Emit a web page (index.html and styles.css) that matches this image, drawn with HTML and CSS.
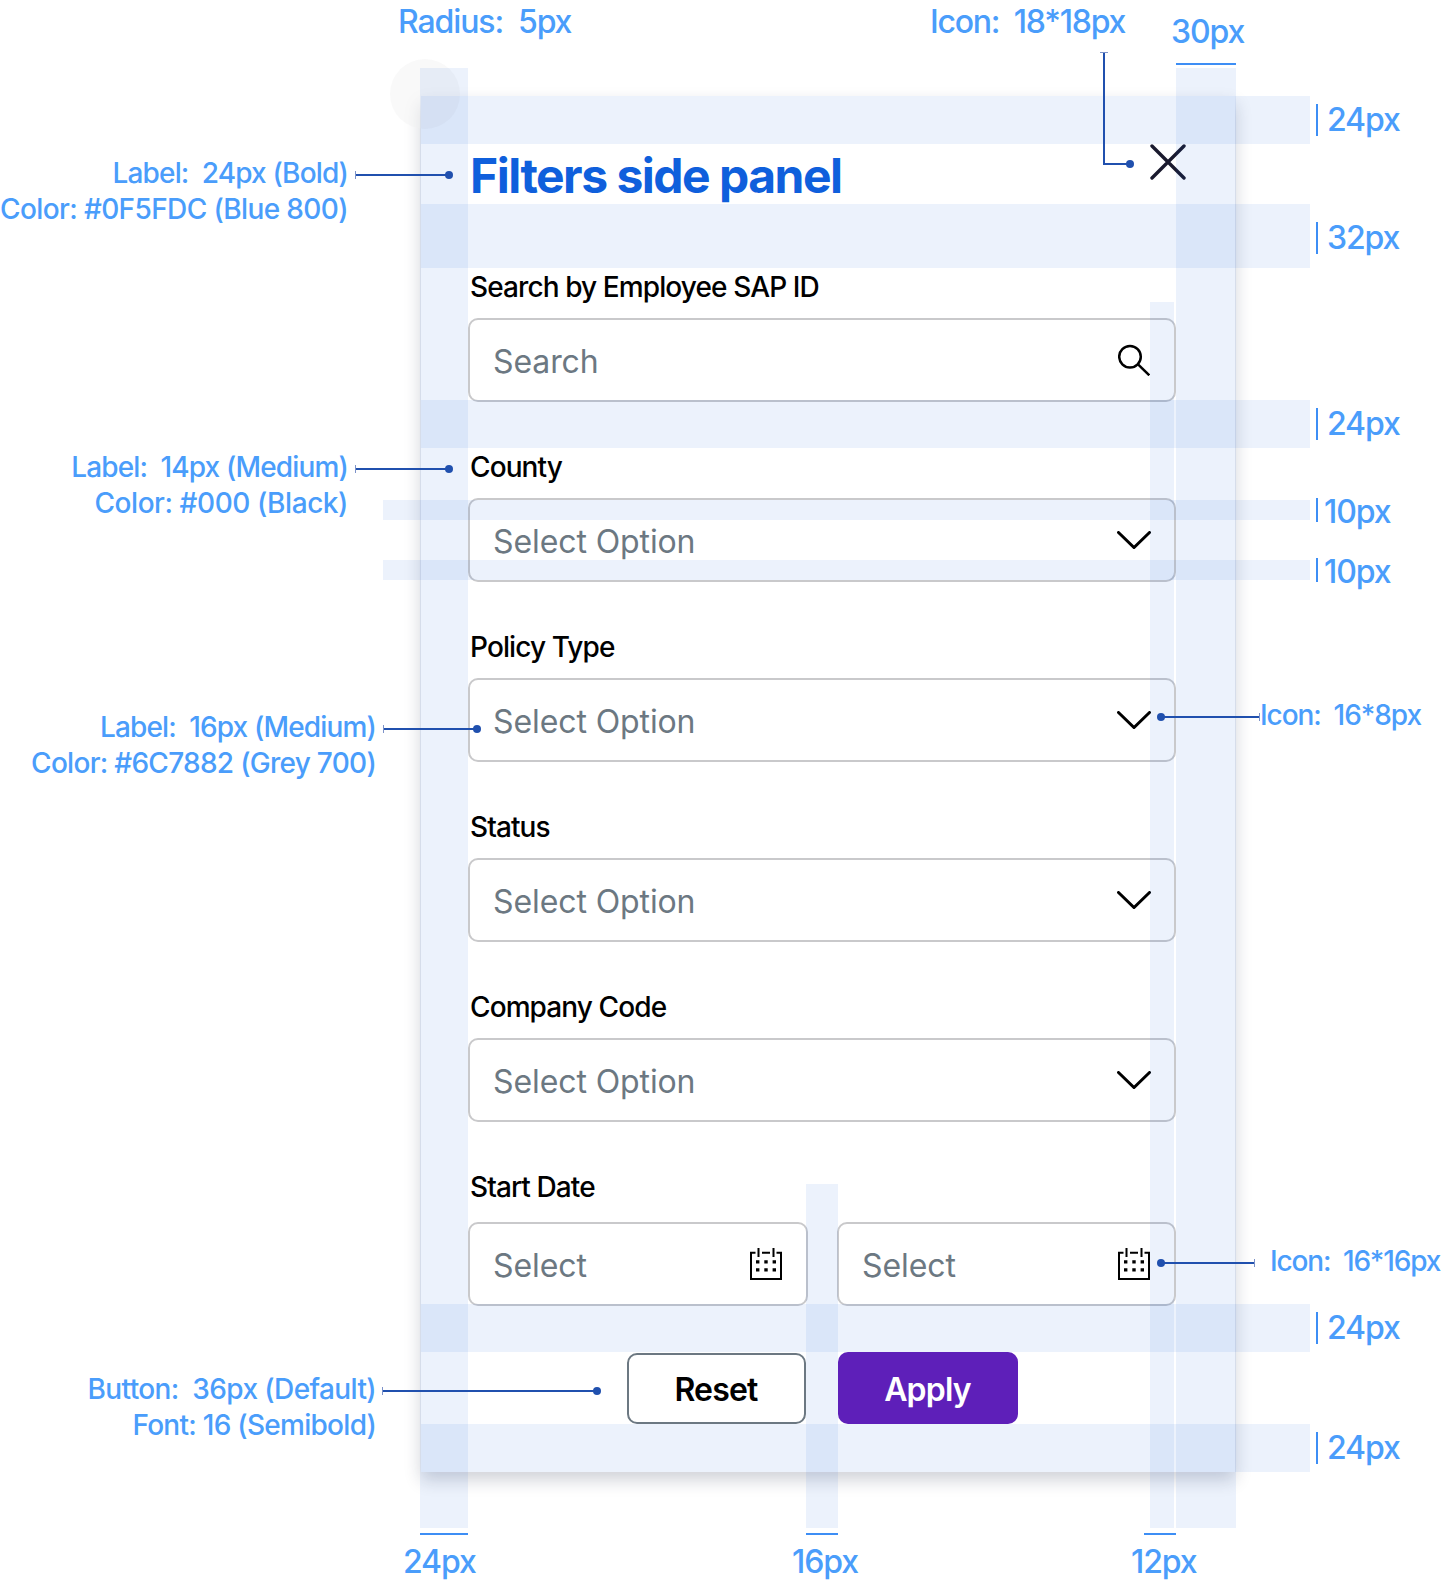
FILE: index.html
```html
<!DOCTYPE html>
<html lang="en">
<head>
<meta charset="utf-8">
<title>Filters side panel spec</title>
<link rel="stylesheet" href="styles.css">
</head>
<body>
<div class="canvas">
  <aside class="panel">
    <header class="panel-head">
      <h1 class="panel-title">Filters side panel</h1>
      <svg class="icon-close" viewBox="0 0 36 36" width="36" height="36"><path d="M2 2 34 34M34 2 2 34"/></svg>
    </header>
    <div class="field">
      <label class="field-label">Search by Employee SAP ID</label>
      <div class="control"><span>Search</span>
        <svg class="icon-search" viewBox="0 0 32 32" width="32" height="32"><circle cx="12" cy="12.7" r="10.8"/><path d="M20.3 20.7 31.3 31.3"/></svg>
      </div>
    </div>
    <div class="field">
      <label class="field-label">County</label>
      <div class="control"><span>Select Option</span>
        <svg class="icon-chevron" viewBox="0 0 34 18" width="34" height="18"><path d="M1.5 1.5 17 16.5 32.5 1.5"/></svg>
      </div>
    </div>
    <div class="field">
      <label class="field-label">Policy Type</label>
      <div class="control"><span>Select Option</span>
        <svg class="icon-chevron" viewBox="0 0 34 18" width="34" height="18"><path d="M1.5 1.5 17 16.5 32.5 1.5"/></svg>
      </div>
    </div>
    <div class="field">
      <label class="field-label">Status</label>
      <div class="control"><span>Select Option</span>
        <svg class="icon-chevron" viewBox="0 0 34 18" width="34" height="18"><path d="M1.5 1.5 17 16.5 32.5 1.5"/></svg>
      </div>
    </div>
    <div class="field">
      <label class="field-label">Company Code</label>
      <div class="control"><span>Select Option</span>
        <svg class="icon-chevron" viewBox="0 0 34 18" width="34" height="18"><path d="M1.5 1.5 17 16.5 32.5 1.5"/></svg>
      </div>
    </div>
    <div class="field field-date">
      <label class="field-label">Start Date</label>
      <div class="date-row">
        <div class="control"><span>Select</span>
          <svg class="icon-cal" viewBox="0 0 32 32" width="32" height="32"><path class="cal-line" d="M5.5 4.7H1V31H31V4.7H26.5M12 4.7H20M8.5 0V9M23.5 0V9"/><path class="cal-dots" d="M6 12.2h3.4v3.4H6zM14.3 12.2h3.4v3.4h-3.4zM22.6 12.2h3.4v3.4h-3.4zM6 20.2h3.4v3.4H6zM14.3 20.2h3.4v3.4h-3.4zM22.6 20.2h3.4v3.4h-3.4z"/></svg>
        </div>
        <div class="control"><span>Select</span>
          <svg class="icon-cal" viewBox="0 0 32 32" width="32" height="32"><path class="cal-line" d="M5.5 4.7H1V31H31V4.7H26.5M12 4.7H20M8.5 0V9M23.5 0V9"/><path class="cal-dots" d="M6 12.2h3.4v3.4H6zM14.3 12.2h3.4v3.4h-3.4zM22.6 12.2h3.4v3.4h-3.4zM6 20.2h3.4v3.4H6zM14.3 20.2h3.4v3.4h-3.4zM22.6 20.2h3.4v3.4h-3.4z"/></svg>
        </div>
      </div>
    </div>
    <div class="actions">
      <button class="btn btn-reset" type="button">Reset</button>
      <button class="btn btn-apply" type="button">Apply</button>
    </div>
  </aside>

  <div class="corner-mark"></div>

  <div class="guide h h1"></div>
  <div class="guide h h2"></div>
  <div class="guide h h3"></div>
  <div class="guide h h4"></div>
  <div class="guide h h5"></div>
  <div class="guide h h6"></div>
  <div class="guide h h7"></div>
  <div class="guide v v1"></div>
  <div class="guide v v2"></div>
  <div class="guide v v3"></div>
  <div class="guide v v4"></div>

  <div class="bar bar-r r1"></div>
  <div class="bar bar-r r2"></div>
  <div class="bar bar-r r3"></div>
  <div class="bar bar-r r4"></div>
  <div class="bar bar-r r5"></div>
  <div class="bar bar-r r6"></div>
  <div class="bar bar-r r7"></div>
  <div class="bar bar-t t1"></div>
  <div class="bar bar-t t2"></div>
  <div class="bar bar-t t3"></div>
  <div class="bar bar-t t4"></div>

  <div class="leader l-title"></div>
  <div class="leader l-county"></div>
  <div class="leader l-select"></div>
  <div class="leader l-button"></div>
  <div class="leader l-chevron"></div>
  <div class="leader l-cal"></div>
  <div class="leader-elbow"></div>

  <p class="note big n-radius">Radius:  5px</p>
  <p class="note big n-icon18">Icon:  18*18px</p>
  <p class="note big n-30">30px</p>
  <p class="note big n-r1">24px</p>
  <p class="note big n-r2">32px</p>
  <p class="note big n-r3">24px</p>
  <p class="note big n-r4">10px</p>
  <p class="note big n-r5">10px</p>
  <p class="note big n-r6">24px</p>
  <p class="note big n-r7">24px</p>
  <p class="note big n-b1">24px</p>
  <p class="note big n-b2">16px</p>
  <p class="note big n-b3">12px</p>

  <p class="note n-right n-title">Label:  24px (Bold)<br><span class="wide-1">Color: #0F5FDC (Blue 800)</span></p>
  <p class="note n-right n-county">Label:  14px (Medium)<br><span class="wide-2">Color: #000 (Black)</span></p>
  <p class="note n-right n-select">Label:  16px (Medium)<br><span class="wide-3">Color: #6C7882 (Grey 700)</span></p>
  <p class="note n-right n-button"><span class="wide-1">Button:  36px (Default)</span><br><span class="wide-3">Font: 16 (Semibold)</span></p>
  <p class="note n-chev">Icon:  16*8px</p>
  <p class="note n-cal">Icon:  16*16px</p>
</div>
</body>
</html>
```

FILE: styles.css
```css
* { box-sizing: border-box; }

html, body { margin: 0; background: #fff; }

body {
  font-family: Inter, "Liberation Sans", sans-serif;
  color: #000;
}

.canvas {
  position: relative;
  width: 1442px;
  height: 1580px;
  padding: 96px 0 0 421px;
  overflow: hidden;
}

/* Panel */
.panel {
  width: 814px;
  padding: 48px 59px 48px 47px;
  background: #fff;
  box-shadow: 0 8px 16px rgba(20, 30, 60, .2);
}

.panel-head {
  display: flex;
  justify-content: space-between;
  align-items: flex-start;
  height: 60px;
  margin-bottom: 64px;
}

.panel-title {
  margin: 0;
  padding: 2px 0 0 2px;
  font-size: 48px;
  line-height: 60px;
  font-weight: 700;
  letter-spacing: -1.5px;
  color: #0F5FDC;
}

.icon-close {
  margin-right: -10px;
  fill: none;
  stroke: #1a1a2e;
  stroke-width: 3.4;
  stroke-linecap: round;
}

.field { margin-bottom: 46px; }

.field-label {
  display: block;
  height: 38px;
  margin-bottom: 12px;
  padding-left: 2px;
  font-size: 28px;
  line-height: 38px;
  font-weight: 450;
  letter-spacing: -.9px;
}

.control {
  display: flex;
  justify-content: space-between;
  align-items: center;
  height: 84px;
  padding: 0 24px 0 23px;
  background: #fff;
  border: 2px solid #c9c9cb;
  border-radius: 10px;
  font-size: 32px;
  letter-spacing: -.1px;
  color: #6C7882;
}

.control span { padding-top: 2px; }

.control svg { flex: none; }

.icon-search {
  fill: none;
  stroke: #000;
  stroke-width: 2.5;
}

.icon-chevron {
  margin-right: -1px;
  fill: none;
  stroke: #000;
  stroke-width: 3;
  stroke-linecap: round;
}

.cal-line { fill: none; stroke: #000; stroke-width: 2; }
.cal-dots { fill: #000; }

.field-date .field-label { margin-bottom: 16px; }

.date-row {
  display: grid;
  grid-template-columns: 340px 339px;
  gap: 29px;
}

.actions {
  display: flex;
  justify-content: center;
  align-items: center;
  gap: 32px;
  height: 72px;
}

.btn {
  padding: 2px 0 0;
  font-family: inherit;
  font-size: 32px;
  font-weight: 600;
  letter-spacing: -.8px;
  border-radius: 10px;
}

.btn-reset {
  width: 179px;
  height: 71px;
  background: #fff;
  border: 2px solid #6C7882;
  color: #000;
}

.btn-apply {
  width: 180px;
  height: 72px;
  background: #5E1FB9;
  border: 0;
  color: #fff;
}

/* Corner marker */
.corner-mark {
  position: absolute;
  left: 390px;
  top: 59px;
  width: 70px;
  height: 70px;
  border-radius: 50%;
  background: rgba(240, 240, 240, .4);
}

/* Spacing guides */
.guide { position: absolute; background: rgba(15, 95, 220, .08); pointer-events: none; }

.h { left: 421px; width: 889px; }
.h1 { top: 96px; height: 48px; }
.h2 { top: 204px; height: 64px; }
.h3 { top: 400px; height: 48px; }
.h4 { top: 500px; height: 20px; left: 383px; width: 927px; }
.h5 { top: 560px; height: 20px; left: 383px; width: 927px; }
.h6 { top: 1304px; height: 48px; }
.h7 { top: 1424px; height: 48px; }

.v { top: 68px; height: 1460px; }
.v1 { left: 420px; width: 48px; }
.v2 { left: 1176px; width: 60px; }
.v3 { left: 1150px; width: 24px; top: 302px; height: 1226px; }
.v4 { left: 806px; width: 32px; top: 1184px; height: 344px; }

/* Measure bars */
.bar { position: absolute; background: #3D8EF5; }

.bar-r { left: 1316px; width: 2px; height: 32px; }
.r1 { top: 104px; }
.r2 { top: 222px; }
.r3 { top: 408px; }
.r4 { top: 498px; height: 24px; }
.r5 { top: 558px; height: 24px; }
.r6 { top: 1312px; }
.r7 { top: 1432px; }

.bar-t { height: 2px; }
.t1 { left: 1176px; top: 63px; width: 60px; }
.t2 { left: 420px; top: 1533px; width: 48px; }
.t3 { left: 806px; top: 1533px; width: 32px; }
.t4 { left: 1144px; top: 1533px; width: 32px; }

/* Leader lines */
.leader {
  position: absolute;
  height: 2px;
  background: #2050AE;
}

.leader::before {
  content: "";
  position: absolute;
  left: 0;
  top: -3px;
  width: 1px;
  height: 8px;
  background: #7d93c9;
}

.leader::after {
  content: "";
  position: absolute;
  right: -4px;
  top: -3px;
  width: 8px;
  height: 8px;
  border-radius: 50%;
  background: #2050AE;
}

.l-title { left: 355px; top: 174px; width: 94px; }
.l-county { left: 355px; top: 468px; width: 94px; }
.l-select { left: 383px; top: 728px; width: 94px; }
.l-button { left: 382px; top: 1390px; width: 215px; }

.l-chevron { left: 1161px; top: 716px; width: 99px; }
.l-cal { left: 1161px; top: 1262px; width: 94px; }

.l-chevron::after, .l-cal::after { right: auto; left: -4px; }
.l-chevron::before, .l-cal::before { left: auto; right: 0; }

.leader-elbow {
  position: absolute;
  left: 1103px;
  top: 52px;
  width: 27px;
  height: 113px;
  border-left: 2px solid #2050AE;
  border-bottom: 2px solid #2050AE;
}

.leader-elbow::before {
  content: "";
  position: absolute;
  left: -5px;
  top: 0;
  width: 8px;
  height: 1px;
  background: #7d93c9;
}

.leader-elbow::after {
  content: "";
  position: absolute;
  right: -4px;
  bottom: -5px;
  width: 8px;
  height: 8px;
  border-radius: 50%;
  background: #2050AE;
}

/* Annotation text */
.note {
  position: absolute;
  margin: 0;
  white-space: pre;
  font-size: 28px;
  line-height: 36px;
  font-weight: 550;
  letter-spacing: -.85px;
  color: #4A9DFB;
}

.big { font-size: 32px; line-height: 40px; letter-spacing: -1.1px; }

.wide-1 { letter-spacing: -.62px; }
.wide-2 { letter-spacing: -.43px; }
.wide-3 { letter-spacing: -.72px; }

.n-right { text-align: right; right: 1094px; }

.n-radius { left: 398px; top: 2px; }
.n-icon18 { left: 930px; top: 2px; letter-spacing: -1.25px; }
.n-30 { left: 1171px; top: 12px; }

.n-r1, .n-r2, .n-r3, .n-r6, .n-r7 { left: 1327px; }
.n-r4, .n-r5 { left: 1324px; }
.n-r1 { top: 100px; }
.n-r2 { top: 218px; }
.n-r3 { top: 404px; }
.n-r4 { top: 492px; }
.n-r5 { top: 552px; }
.n-r6 { top: 1308px; }
.n-r7 { top: 1428px; }

.n-b1, .n-b2, .n-b3 { top: 1542px; }
.n-b1 { left: 403px; }
.n-b2 { left: 792px; }
.n-b3 { left: 1131px; }

.n-title { top: 155px; }
.n-county { top: 449px; }
.n-select { top: 709px; right: 1066px; }
.n-button { top: 1371px; right: 1066px; }
.n-chev { left: 1260px; top: 697px; letter-spacing: -1.05px; }
.n-cal { left: 1270px; top: 1243px; letter-spacing: -1.15px; }
```
